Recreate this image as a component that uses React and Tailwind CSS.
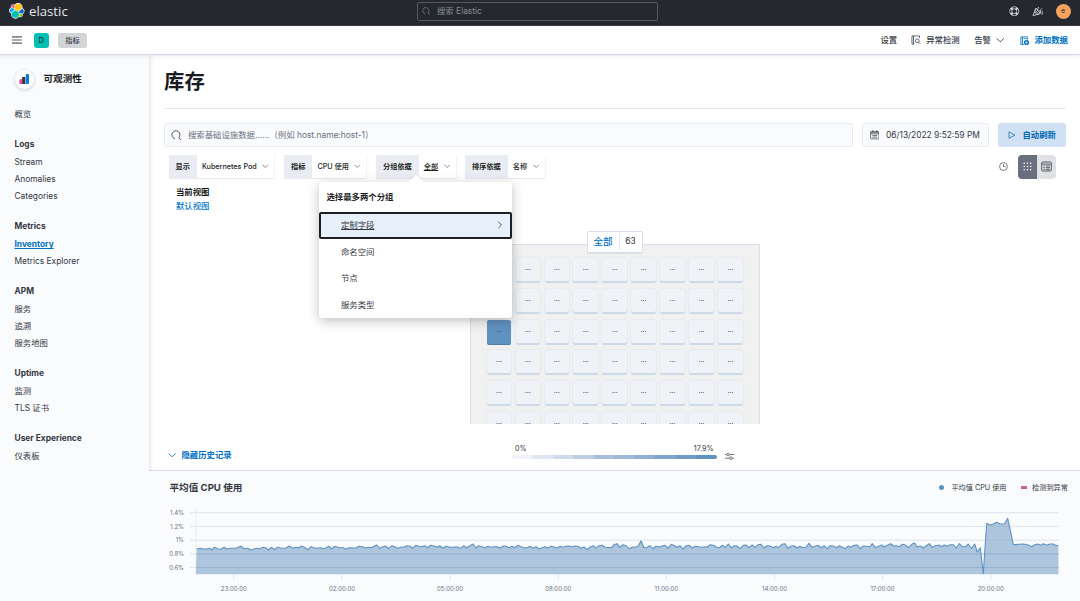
import React from "react";

const NAV = [
  { title: "Logs", items: ["Stream", "Anomalies", "Categories"] },
  { title: "Metrics", items: ["Inventory", "Metrics Explorer"] },
  { title: "APM", items: ["服务", "追溯", "服务地图"] },
  { title: "Uptime", items: ["监测", "TLS 证书"] },
  { title: "User Experience", items: ["仪表板"] },
];

const LEGEND = [
  "bg-[#eff3f8]", "bg-[#dfe7f1]", "bg-[#cfdaea]", "bg-[#bfcee4]", "bg-[#a8bfdb]",
  "bg-[#9fb8d8]", "bg-[#8fafd3]", "bg-[#7fa5cd]", "bg-[#709cc7]", "bg-[#6092c0]",
];

// CPU usage samples in thirds of a pixel, each span with its own origin.
const SPANS = [
  {
    ox: 1, oy: -40,
    d: "140:357,150:355,165:358,178:355,185:360,193:352,203:356,213:358,222:352,230:357,240:355,258:355,272:349,283:356,293:355,302:360,312:357,322:355,328:357,338:352,347:353,355:360,365:352,373:359,383:352,395:355,408:354,418:348,428:355,437:352,447:353,455:348,465:353,474:359,483:350,492:353,502:355,512:353,518:356,527:354,536:349,545:356,555:349,563:352,573:353,580:353,587:358,596:353,610:354,618:353,627:349,638:350,647:354,654:352,663:353,670:350,680:345,689:355,697:351,706:348,716:356,726:347,734:350,743:355,752:352,761:352,770:347,780:349,788:355,797:346,806:349,815:350,824:347,833:353,842:346,852:348,861:352,869:347,879:355,888:349",
  },
  {
    ox: 301, oy: 30,
    d: "0:142,22:141,32:145,41:137,50:144,60:137,69:132,78:144,86:137,96:140,106:143,114:139,123:142,132:140,141:140,150:144,160:138,168:139,177:143,186:139,194:143,204:136,213:140,222:143,232:143,240:139,249:145,258:140,267:147,276:143,285:140,294:144,303:139,312:141,321:145,330:139,338:142,347:139,356:138,365:140,374:138,384:139,393:145,402:141,411:149,420:142,430:137,438:145,447:137,456:136,465:142,485:143,492:134,501:131,509:142,519:134,528:137,538:146,548:141,556:142,565:138,573:122,582:143,592:142,600:137,609:146,618:139,627:141,645:136,654:145,664:133,673:137,682:142,690:137,699:147,708:138,717:136,727:144,736:139,755:142,764:140,772:141,781:134,790:136,800:142,808:143,817:136,826:142,835:132,844:144,852:137,861:138,870:146,880:136,888:135,897:143,907:135,915:142,924:134,933:133,942:144,951:137,961:138,970:143,978:139,986:143,996:133,1005:131",
  },
  {
    ox: 631, oy: 0,
    d: "24:235,33:229,42:227,51:234,60:229,68:233,78:232,87:220,96:232,105:229,114:226,124:234,132:227,142:236,150:227,160:228,170:233,178:227,187:232,196:236,205:228,213:232,222:226,232:225,241:236,250:228,260:229,269:231,277:221,286:233,296:229,305:225,313:231,322:226,332:221,341:228,349:227,358:230,367:223,376:225,386:233,395:223,404:219,411:231,421:228,430:234,439:227,448:221,457:232,466:227,477:225,484:230,493:225,501:229,510:224,520:224,529:234,538:221,547:230,557:230,565:222,574:235,584:222,592:246,601:233,610:311,620:160,630:165,640:162,650:157,660:162,674:161,683:145,692:187,700:224,730:222,745:225,755:230,764:224,773:222,782:226,790:221,800:226,810:222,820:222,829:227,835:226",
  },
];

const POINTS = SPANS.flatMap(({ ox, oy, d }) =>
  d.split(",").map((p) => {
    const [x, y] = p.split(":").map(Number);
    return `${(ox + x / 3).toFixed(1)},${(oy + y / 3).toFixed(1)}`;
  })
).join(" ");

const GRID = [
  [42.7, "1.4%"], [56.4, "1.2%"], [70.2, "1%"], [84, "0.8%"], [97.6, "0.6%"],
];
const TICKS = [
  [84.8, "23:00:00"], [193, "02:00:00"], [301, "05:00:00"], [409.2, "08:00:00"],
  [517.3, "11:00:00"], [625.5, "14:00:00"], [733.5, "17:00:00"], [841.7, "20:00:00"],
];

function Chevron({ className = "", dir = "down" }) {
  return (
    <svg viewBox="0 0 16 16" className={className} fill="none" stroke="currentColor" strokeWidth="1.6" strokeLinecap="round" strokeLinejoin="round">
      <path d={dir === "down" ? "M2 5l6 6 6-6" : "M5 2l6 6-6 6"} />
    </svg>
  );
}

function SearchIcon({ className }) {
  return (
    <svg viewBox="0 0 16 16" className={className} fill="none" stroke="currentColor" strokeWidth="1.3" strokeLinecap="round">
      <path d="M5.6 13.3A6.2 6.2 0 1 1 11.8 11.9L15 15.2" />
    </svg>
  );
}

function ElasticLogo() {
  return (
    <svg viewBox="0 0 32 32" className="h-[15.5px] w-[15.5px] shrink-0">
      <path fill="#FFF" d="M32 16.77a6.334 6.334 0 00-1.14-3.63 6.269 6.269 0 00-3.02-2.3 9.078 9.078 0 00-3.84-9.1 8.983 8.983 0 00-12.4 2.05 4.765 4.765 0 00-5.9-.1 4.833 4.833 0 00-1.6 5.7 6.354 6.354 0 00-3 2.32A6.418 6.418 0 000 15.36a6.36 6.36 0 004.18 5.95 9.05 9.05 0 003.84 9.1 8.973 8.973 0 0012.38-2.04 4.748 4.748 0 005.9.12 4.82 4.82 0 001.6-5.7A6.36 6.36 0 0032 16.77" />
      <path fill="#FEC514" d="M12.58 13.79l7 3.2 7.07-6.2a7.9 7.9 0 00-6.35-9.31 7.85 7.85 0 00-8.1 3.35l-1.18 6.1z" />
      <path fill="#00BFB3" d="M5.33 21.22a7.98 7.98 0 006.34 9.36 7.93 7.93 0 008.15-3.4l1.17-6.09-1.56-3-7.03-3.2z" />
      <path fill="#F04E98" d="M5.29 9.08l4.8 1.14 1.05-5.46A3.8 3.8 0 005.4 5a3.8 3.8 0 00-.11 4.08" />
      <path fill="#1BA9F5" d="M4.87 10.22A5.35 5.35 0 001.3 15.2a5.28 5.28 0 003.4 4.93l6.73-6.1-1.24-2.65z" />
      <path fill="#93C90E" d="M20.87 27.19a3.79 3.79 0 005.75-.24 3.8 3.8 0 00.12-4.08l-4.8-1.12z" />
      <path fill="#0B64DD" d="M21.85 20.56l5.28 1.24a5.34 5.34 0 003.57-5 5.27 5.27 0 00-3.4-4.91l-6.91 6.06z" />
    </svg>
  );
}

function TopBar() {
  return (
    <header className="flex h-[26px] shrink-0 items-center border-b border-[#3a3c42] bg-[#25282f] pb-[3px] pl-[9px] text-white">
      <div className="flex w-[408px] items-center gap-[4.5px]">
        <ElasticLogo />
        <span className="pt-[2px] font-['Open_Sans','Noto_Sans',sans-serif] text-[13.2px] leading-none text-[#e6e7ea]">elastic</span>
      </div>
      <div className="flex h-[19px] w-[241px] items-center gap-[7px] rounded-[2px] border border-[#55585f] pl-[4px] text-[8.4px] text-[#8a8c92]">
        <SearchIcon className="h-[8px] w-[8px]" />
        <span>搜索 Elastic</span>
      </div>
      <div className="ml-auto flex items-center gap-[13px] pr-[9.5px] text-[#dfe0e4]">
        <svg viewBox="0 0 20 20" className="mr-[-1px] h-[10.5px] w-[10.5px]" fill="none" stroke="currentColor">
          <circle cx="10" cy="10" r="8.6" strokeWidth="1.4" />
          <circle cx="10" cy="10" r="4.6" strokeWidth="1.4" />
          <path d="M3.9 3.9l2.9 2.9M13.2 13.2l2.9 2.9M16.1 3.9l-2.9 2.9M6.8 13.2l-2.9 2.9" strokeWidth="4.2" />
        </svg>
        <svg viewBox="0 0 16 16" className="h-[11px] w-[11px]" fill="none" stroke="currentColor" strokeWidth="1.2" strokeLinecap="round" strokeLinejoin="round">
          <path d="M5.5 3.5L1.5 14l10-2.8zM3.8 8.2l3.4 4.2M8 6.2L9.4 2M10 8l4.2-4.2M12 10l.5-3M14.8 8v4M4.5 6l5 6" />
        </svg>
        <span className="flex h-[15px] w-[15px] items-center justify-center rounded-full bg-[#f5a35c] text-[7.2px] text-[#3a2a1c]">e</span>
      </div>
    </header>
  );
}

function SubBar() {
  return (
    <div className="relative z-10 flex h-[28.5px] shrink-0 items-center border-b border-[#d3dae6] bg-white pl-[12px] pt-[1px] text-[8.4px] font-medium text-[#343741] shadow-[0_1px_4px_rgba(0,0,0,0.10)]">
      <svg viewBox="0 0 10 8" className="h-[8px] w-[10px]" stroke="#5a5d66" strokeWidth="1.2">
        <path d="M0 .9h10M0 4h10M0 7.1h10" />
      </svg>
      <span className="ml-[12px] flex h-[14.5px] w-[14.5px] items-center justify-center rounded-[3px] bg-[#00bfb3] text-[7.4px] text-[#12302f]">D</span>
      <span className="ml-[9.5px] flex h-[14.5px] w-[29px] items-center justify-center rounded-[3px] bg-[#d3d4d8] text-[7.2px]">指标</span>
      <div className="ml-auto flex items-center pr-[12px]">
        <span>设置</span>
        <svg viewBox="0 0 16 16" className="ml-[14px] h-[10px] w-[10px]" fill="none" stroke="currentColor" strokeWidth="1.2">
          <path d="M5 14.5H1.5v-13h12V5M4 1.5v13" />
          <circle cx="10" cy="9.3" r="3" />
          <path d="M12.2 11.5l3 3" />
        </svg>
        <span className="ml-[5px]">异常检测</span>
        <span className="ml-[14.5px]">告警</span>
        <Chevron className="ml-[5px] h-[8.5px] w-[8.5px]" />
        <svg viewBox="0 0 16 16" className="ml-[15.5px] h-[9.5px] w-[9.5px] text-[#0071c2]" fill="none" stroke="currentColor" strokeWidth="1.4">
          <path d="M7 14.5H1.5v-13h11V6M4.2 1.5v13M6 4.5h5" />
          <circle cx="11" cy="11" r="4.4" fill="currentColor" stroke="none" />
          <path d="M11 8.7v4.6M8.7 11h4.6" stroke="#fff" strokeWidth="1.2" />
        </svg>
        <span className="ml-[5px] font-bold text-[#0071c2]">添加数据</span>
      </div>
    </div>
  );
}

function Sidebar() {
  return (
    <nav className="w-[149px] shrink-0 bg-[#fafbfd] pl-[14.5px] pt-[14.5px] text-[8.4px] text-[#343741] shadow-[1px_0_4px_rgba(0,0,0,0.13)]">
      <div className="flex h-[20px] items-center">
        <span className="flex h-[19px] w-[19px] items-center justify-center rounded-full bg-white shadow-[0_1px_4px_rgba(0,0,0,0.18)]">
          <svg viewBox="0 0 10 10" className="h-[10px] w-[10px]">
            <path fill="#f04e98" d="M.3 6.2a1 1 0 011-1h1.8V10H1.3a1 1 0 01-1-1z" />
            <path fill="#343741" d="M3.1 3h3.2v7H3.1z" />
            <path fill="#0b7bd8" d="M6.7.8a1 1 0 011-.8H9a1 1 0 011 1v8a1 1 0 01-1 1H6.7z" />
          </svg>
        </span>
        <span className="ml-[10px] text-[9.6px] font-bold text-[#1a1c21]">可观测性</span>
      </div>
      <div className="mb-[13px] mt-[17px] flex h-[17px] items-center">概览</div>
      {NAV.map((g) => (
        <div key={g.title} className="mb-[13px]">
          <div className="mb-px flex h-[17px] items-center font-bold">{g.title}</div>
          {g.items.map((t) => (
            <div key={t} className={t === "Inventory" ? "flex h-[17px] items-center font-bold text-[#0071c2] underline" : "flex h-[17px] items-center"}>
              {t}
            </div>
          ))}
        </div>
      ))}
    </nav>
  );
}

function Filter({ label, value, className, underline, children }) {
  return (
    <div className={`relative flex h-[23.5px] text-[7.2px] font-medium text-[#1a1c21] shadow-[0_1px_1px_rgba(0,0,0,0.08),1px_0_1px_rgba(0,0,0,0.03)] ${className}`}>
      <span className="flex items-center bg-[#e9edf3] px-[7px] font-bold">{label}</span>
      <span className="flex flex-1 items-center justify-between pl-[5px] pr-[5.5px]">
        <span className={underline ? "underline" : ""}>{value}</span>
        <Chevron className="h-[6.5px] w-[6.5px] text-[#4a4d57]" />
      </span>
      {children}
    </div>
  );
}

function GroupMenu() {
  return (
    <div className="absolute left-[-57px] top-[27.5px] z-20 h-[136px] w-[193px] rounded-[3px] bg-white text-[8.4px] font-normal text-[#343741] shadow-[0_3px_12px_rgba(0,0,0,0.25)]">
      <svg viewBox="0 0 16 8" className="absolute left-[89px] top-[-7px] h-[8px] w-[16px]">
        <path d="M0 8l8-8 8 8z" fill="#fff" />
      </svg>
      <div className="flex h-[29.5px] items-center pl-[7.5px] font-bold text-[#1a1c21]">选择最多两个分组</div>
      <div className="flex h-[27px] items-center justify-between rounded-[2px] border-2 border-[#1d1f25] bg-[#e6f0fa] pl-[20px] pr-[6.5px] underline">
        定制字段
        <Chevron dir="right" className="h-[8px] w-[8px]" />
      </div>
      {["命名空间", "节点", "服务类型"].map((t) => (
        <div key={t} className="flex h-[26.4px] items-center pl-[22px]">{t}</div>
      ))}
    </div>
  );
}

function Toolbar() {
  return (
    <div className="mt-[7.5px] flex items-center pl-[4.5px]">
      <Filter label="显示" value="Kubernetes Pod" className="w-[105.5px]" />
      <Filter label="指标" value="CPU 使用" className="ml-[10px] w-[82px]" />
      <Filter label="分组依据" value="全部" underline className="ml-[10px] w-[79.5px]">
        <GroupMenu />
      </Filter>
      <Filter label="排序依据" value="名称" className="ml-[9.5px] w-[80px]" />
      <div className="ml-auto flex items-center pr-[10px] text-[#4a4d57]">
        <svg viewBox="0 0 16 16" className="mr-[10px] h-[9px] w-[9px]" fill="none" stroke="currentColor" strokeWidth="1.3">
          <circle cx="8" cy="8" r="7" />
          <path d="M8 3.5V8h4" />
        </svg>
        <div className="flex h-[24px] overflow-hidden rounded-[4px]">
          <span className="flex w-[19.5px] items-center justify-center bg-[#69707d]">
            <svg viewBox="0 0 9 9" className="h-[9px] w-[9px]" fill="#fff">
              {[0.6, 3.8, 7].map((y) => [0.6, 3.8, 7].map((x) => <rect key={`${x}-${y}`} x={x} y={y} width="1.3" height="1.3" />))}
            </svg>
          </span>
          <span className="flex w-[18.5px] items-center justify-center bg-[#e0e1e5]">
            <svg viewBox="0 0 16 16" className="h-[11px] w-[11px]" fill="none" stroke="currentColor" strokeWidth="1.3">
              <rect x="1" y="1.5" width="14" height="13" rx="1.5" />
              <path d="M1 4.5h14M3.5 7.2h2M7 7.2h6M3.5 9.7h2M7 9.7h6M3.5 12.2h2M7 12.2h6" />
            </svg>
          </span>
        </div>
      </div>
    </div>
  );
}

function Waffle() {
  return (
    <div className="relative ml-[306px] mt-[30px] h-[180.5px] w-[290px]">
      <div className="flex h-full flex-col overflow-hidden rounded-t-[2px] border border-b-0 border-[#d8dfea] bg-[#f1f1f1] pl-[15.7px] pt-[13.5px]">
        <div className="grid w-[256px] grid-cols-9 gap-x-[4.43px] gap-y-[6.8px]">
          {Array.from({ length: 54 }, (_, i) => (
            <div
              key={i}
              className={
                i === 18
                  ? "flex h-[24px] items-center justify-center rounded-[2px] bg-[#6092c0] text-[6px] font-bold text-[#2f5478] shadow-[0_1px_0_#4d7ba8]"
                  : "flex h-[24px] items-center justify-center rounded-[2px] bg-[#eff3f8] text-[6px] font-bold text-[#4a4d57] shadow-[inset_0_-1px_0_#cdd9e6,0_1px_0_#cdd9e6,0_0_2px_rgba(100,120,150,0.18)]"
              }
            >
              <span className="-mt-[4px] leading-none">...</span>
            </div>
          ))}
        </div>
      </div>
      <div className="absolute left-[116.5px] top-[-13px] flex h-[23px] w-[56px] items-center rounded-[2px] border border-b-2 border-[#d8dfea] bg-white">
        <span className="flex h-[17px] w-[32px] items-center justify-center border-r border-[#e3e8f0] text-[9.6px] font-medium text-[#0071c2]">全部</span>
        <span className="flex flex-1 justify-center text-[8.4px] text-[#343741]">63</span>
      </div>
    </div>
  );
}

function History() {
  return (
    <section className="flex min-h-0 flex-1 flex-col border-t border-[#d3dae6] bg-[#fafbfd]">
      <div className="-mb-px flex h-[34px] shrink-0 items-center justify-between pl-[20.5px] pr-[12px]">
        <h2 className="text-[9.6px] font-bold text-[#343741]">平均值 CPU 使用</h2>
        <div className="flex items-center text-[7.2px] text-[#343741]">
          <i className="h-[5px] w-[5px] rounded-full bg-[#6092c0]" />
          <span className="ml-[7px]">平均值 CPU 使用</span>
          <i className="ml-[14.5px] h-[3px] w-[6px] bg-[#de5c88]" />
          <span className="ml-[5px]">检测到异常</span>
        </div>
      </div>
      <svg viewBox="0 34 931 96" className="h-[96px] w-[931px] shrink-0 overflow-visible">
        {GRID.map(([y, t]) => (
          <g key={t}>
            <path d={`M41 ${y}H909.5`} stroke="#dfe3ee" strokeWidth="1" />
            <text x="35" y={y + 2.2} textAnchor="end" fontSize="6" fill="#69707d">{t}</text>
          </g>
        ))}
        <path d="M47 39v65" stroke="#e6e9f1" strokeWidth="1" />
        <polygon points={`47,104.3 ${POINTS} 909.5,104.3`} fill="#6092c0" fillOpacity="0.5" />
        {[84, 97.6].map((y) => <path key={y} d={`M47 ${y}H909.5`} stroke="#8fb0d0" strokeWidth="0.7" />)}
        <polyline points={POINTS} fill="none" stroke="#6092c0" strokeWidth="1.1" strokeLinejoin="round" />
        {TICKS.map(([x, t]) => (
          <g key={t}>
            <path d={`M${x} 104.5v5`} stroke="#e0e4ec" strokeWidth="1" />
            <text x={x} y="121.2" textAnchor="middle" fontSize="6" fill="#69707d">{t}</text>
          </g>
        ))}
      </svg>
    </section>
  );
}

export default function App() {
  return (
    <div className="flex h-[601px] w-[1080px] flex-col overflow-hidden bg-white font-['Inter','Noto_Sans_CJK_SC',sans-serif] leading-none">
      <TopBar />
      <SubBar />
      <div className="flex min-h-0 flex-1">
        <Sidebar />
        <main className="flex min-w-0 flex-1 flex-col">
          <div className="flex flex-col pl-[15px] pr-[14.5px]">
            <h1 className="flex h-[54px] items-center border-b border-[#e3e6ef] pt-[1.5px] text-[20.4px] font-bold text-[#1a1c21]">库存</h1>
            <div className="mt-[14.5px] flex h-[24px] items-stretch text-[8.4px]">
              <div className="flex w-[689px] items-center gap-[6.5px] rounded-[3px] border border-[#e6eaf3] bg-[#fafbfd] pl-[6px] text-[#69707d]">
                <SearchIcon className="h-[10.5px] w-[10.5px] text-[#343741]" />
                <span>搜索基础设施数据......（例如 host.name:host-1）</span>
              </div>
              <div className="ml-[9px] flex w-[127px] items-center gap-[7px] rounded-[3px] border border-[#e6eaf3] bg-[#fafbfd] pl-[6.5px] text-[#343741]">
                <svg viewBox="0 0 16 16" className="h-[9.5px] w-[9.5px]" fill="none" stroke="#4a4d57" strokeWidth="1.3">
                  <rect x="1" y="2.5" width="14" height="12.5" rx="1" />
                  <path d="M1 4.5h14M1 6.5h14M4.5 0v4M11.5 0v4M4 9.3h8M4 12h8" />
                </svg>
                <span className="whitespace-nowrap">06/13/2022 9:52:59 PM</span>
              </div>
              <div className="ml-auto flex w-[67.5px] items-center justify-center gap-[7px] rounded-[3px] bg-[#cfe1f3] font-bold text-[#0067b3]">
                <svg viewBox="0 0 16 16" className="h-[8px] w-[8px]" fill="none" stroke="currentColor" strokeWidth="1.4" strokeLinejoin="round">
                  <path d="M2 1.5l12 6.5-12 6.5z" />
                </svg>
                自动刷新
              </div>
            </div>
            <Toolbar />
            <div className="mt-[7px] flex h-[28px] flex-col pl-[12px] text-[8.4px]">
              <span className="flex h-[14px] items-center font-bold text-[#1a1c21]">当前视图</span>
              <span className="flex h-[14px] items-center font-medium text-[#0077cc]">默认视图</span>
            </div>
            <Waffle />
          </div>
          <div className="flex h-[46px] items-start pl-[19px] pt-[19.5px]">
            <div className="flex w-[344px] items-center gap-[5px] pt-[7.5px] text-[8.4px] font-bold text-[#0071c2]">
              <Chevron className="h-[8.5px] w-[8.5px]" />
              隐藏历史记录
            </div>
            <div className="w-[204.5px]">
              <div className="flex h-[8px] items-center justify-between px-[3px] pt-[1.5px] text-[7.2px] text-[#343741]">
                <span>0%</span>
                <span>17.9%</span>
              </div>
              <div className="mt-[3px] flex h-[4.5px] overflow-hidden rounded-[2px]">
                {LEGEND.map((c) => <i key={c} className={`flex-1 ${c}`} />)}
              </div>
            </div>
            <svg viewBox="0 0 16 16" className="ml-[8.5px] mt-[8px] h-[9px] w-[9px]" fill="none" stroke="#4a4d57" strokeWidth="1.4">
              <path d="M0 4.5h3M8 4.5h8M0 11h8M13 11h3" />
              <circle cx="5.5" cy="4.5" r="2.3" />
              <circle cx="10.5" cy="11" r="2.3" />
            </svg>
          </div>
          <History />
        </main>
      </div>
    </div>
  );
}
